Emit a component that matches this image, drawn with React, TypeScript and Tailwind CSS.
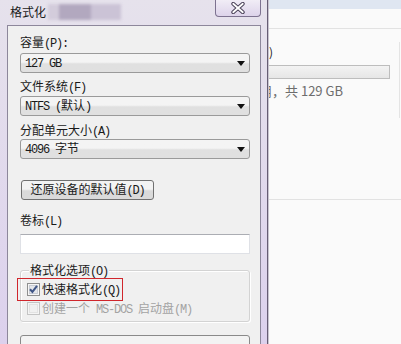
import type { ReactNode } from "react";

// half-width latin run, SimSun style: 6px per char at 12px
function M({ children }: { children: ReactNode }) {
  return (
    <span className="font-['Liberation_Mono','Noto_Sans_CJK_SC',monospace] tracking-[-1.2px]">
      {children}
    </span>
  );
}

function Label({ className, children }: { className: string; children: ReactNode }) {
  return <div className={`h-[14px] whitespace-nowrap text-[12px] leading-[14px] ${className}`}>{children}</div>;
}

function Combo({ className, children }: { className: string; children: ReactNode }) {
  return (
    <div
      className={`flex h-[20px] w-[230px] items-center justify-between rounded-[3px] border border-[#9a9a9a] bg-linear-to-b from-[#f4f4f4] from-45% to-[#e0e0e0] to-55% pl-[4px] pr-[4px] text-[12px] leading-[14px] ${className}`}
    >
      <span className="whitespace-nowrap">{children}</span>
      <svg width="8" height="5" viewBox="0 0 8 5">
        <path d="M0 0h8L4 5z" fill="#111" />
      </svg>
    </div>
  );
}

function CheckBox({ checked, disabled }: { checked?: boolean; disabled?: boolean }) {
  return (
    <svg width="13" height="13" viewBox="0 0 13 13" className="shrink-0">
      <rect x="0.5" y="0.5" width="12" height="12" fill={disabled ? "#f4f4f4" : "#f6f6f6"} stroke={disabled ? "#c4c4c4" : "#8e8f8f"} />
      <rect x="2.5" y="2.5" width="8" height="8" fill={disabled ? "#f0f0f0" : "#e4e6ea"} stroke={disabled ? "#e2e2e2" : "#c8ccd4"} />
      {checked && <path d="M3 6.3l2.4 2.6L10 2.8" stroke="#3f5586" strokeWidth="2" fill="none" />}
    </svg>
  );
}

export default function App() {
  return (
    <div className="relative h-[344px] w-[401px] overflow-hidden bg-[#fafafa] font-['Noto_Sans_CJK_SC',sans-serif] text-[#1a1a1a]">
      {/* explorer window behind the dialog */}
      <div className="flex flex-col">
        <div className="h-[9px] bg-[#dfe6f1]" />
        <div className="h-[19px]" />
        <div className="h-px bg-[#e2e2e2]" />
        <div className="flex">
          <div className="ml-[180px] w-[210px]">
            <div className="mt-[16px] flex w-[93px] justify-end whitespace-nowrap text-[12px] leading-[14px] text-[#222]">本地磁盘 (C:)</div>
            <div className="mt-[6px] h-[14px] w-[210px] border border-[#bdbdbd] bg-linear-to-b from-[#f3f3f3] to-[#e6e6e6]" />
            <div className="mt-[4px] flex w-[163px] justify-end whitespace-nowrap text-[13px] leading-[16px] text-[#6d6d6d]">
              126 GB 可用，共 129 GB
            </div>
          </div>
          <div className="ml-[9px] mt-[13px] h-[76px] border-l border-[#e4e4e4]" />
        </div>
        <div className="mt-[81px] h-px bg-[#e2e2e2]" />
      </div>

      {/* format dialog */}
      <div className="absolute left-0 top-0 flex h-[380px] w-[268px] flex-col border-r border-[#665d74] bg-linear-to-b from-[#e6e2ec] to-[#dbcfed] shadow-[1px_0_0_#c9c4d0]">
        <div className="flex h-[25px] items-start">
          <div className="ml-[10px] mt-[5px] text-[12px] leading-[14px]">格式化</div>
          <div className="ml-[2px] mt-[4px] flex h-[16px] blur-[1.5px]">
            <div className="w-[11px] bg-[#d3ccdb]" />
            <div className="w-[32px] bg-[#b2a8bf]" />
            <div className="w-[30px] bg-[#cbc3d6]" />
          </div>
          <div className="ml-auto mr-[6px] flex h-[17px] w-[46px] items-center justify-center rounded-b-[4px] border border-t-0 border-[#7d7290] bg-linear-to-b from-[#f1edf6] to-[#ddd3ea]">
            <svg width="14" height="12" viewBox="0 0 14 12">
              <path d="M2.2 1.8l9.6 8.4M11.8 1.8l-9.6 8.4" stroke="#4a4158" strokeWidth="3.8" strokeLinecap="round" />
              <path d="M2.2 1.8l9.6 8.4M11.8 1.8l-9.6 8.4" stroke="#ffffff" strokeWidth="1.8" strokeLinecap="round" />
            </svg>
          </div>
        </div>

        <div className="ml-[7px] mr-[6px] flex flex-1 flex-col border border-[#8d879b] bg-[#f0f0f0] pl-[12px]">
          <Label className="mt-[9px]">
            容量<M>(P):</M>
          </Label>
          <Combo className="mt-[4px]">
            <M>127 GB</M>
          </Combo>

          <Label className="mt-[6px]">
            文件系统<M>(F)</M>
          </Label>
          <Combo className="mt-[3px]">
            <M>NTFS (</M>默认<M>)</M>
          </Combo>

          <Label className="mt-[7px]">
            分配单元大小<M>(A)</M>
          </Label>
          <Combo className="mt-[2px]">
            <M>4096 </M>字节
          </Combo>

          <div className="ml-px mt-[21px] flex h-[20px] w-[133px] items-center justify-center rounded-[3px] border border-[#707070] bg-linear-to-b from-[#f3f3f3] from-45% to-[#dadada] to-55% text-[12px] leading-[14px]">
            <span className="whitespace-nowrap">
              还原设备的默认值<M>(D)</M>
            </span>
          </div>

          <Label className="mt-[13px]">
            卷标<M>(L)</M>
          </Label>
          <div className="mt-[7px] h-[20px] w-[230px] border border-[#dfe1e6] border-t-[#abadb3] bg-white" />

          <div className="relative mt-[16px] h-[52px] w-[230px] rounded-[3px] border border-[#d3d3d3] shadow-[inset_1px_1px_0_#fff,1px_1px_0_#fff]">
            <div className="absolute left-[8px] top-[-8px] bg-[#f0f0f0] px-px text-[12px] leading-[14px] whitespace-nowrap">
              格式化选项<M>(O)</M>
            </div>
            <div className="ml-[6px] mt-[12px] flex h-[13px] items-center gap-[2px] text-[12px] leading-[14px]">
              <CheckBox checked />
              <span className="whitespace-nowrap">
                快速格式化<M>(Q)</M>
              </span>
            </div>
            <div className="ml-[6px] mt-[6px] flex h-[13px] items-center gap-[2px] text-[12px] leading-[14px] text-[#a3a3a3]">
              <CheckBox disabled />
              <span className="whitespace-nowrap">
                创建一个<M> MS-DOS </M>启动盘<M>(M)</M>
              </span>
            </div>
            <div className="absolute left-[-4px] top-[7px] h-[23px] w-[106px] border border-[#d0262c]" />
          </div>

          <div className="mt-[13px] h-[23px] w-[230px] rounded-[3px] border border-[#8a8a8a] bg-linear-to-b from-[#f3f3f3] from-45% to-[#dadada] to-55%" />
        </div>
      </div>
    </div>
  );
}
